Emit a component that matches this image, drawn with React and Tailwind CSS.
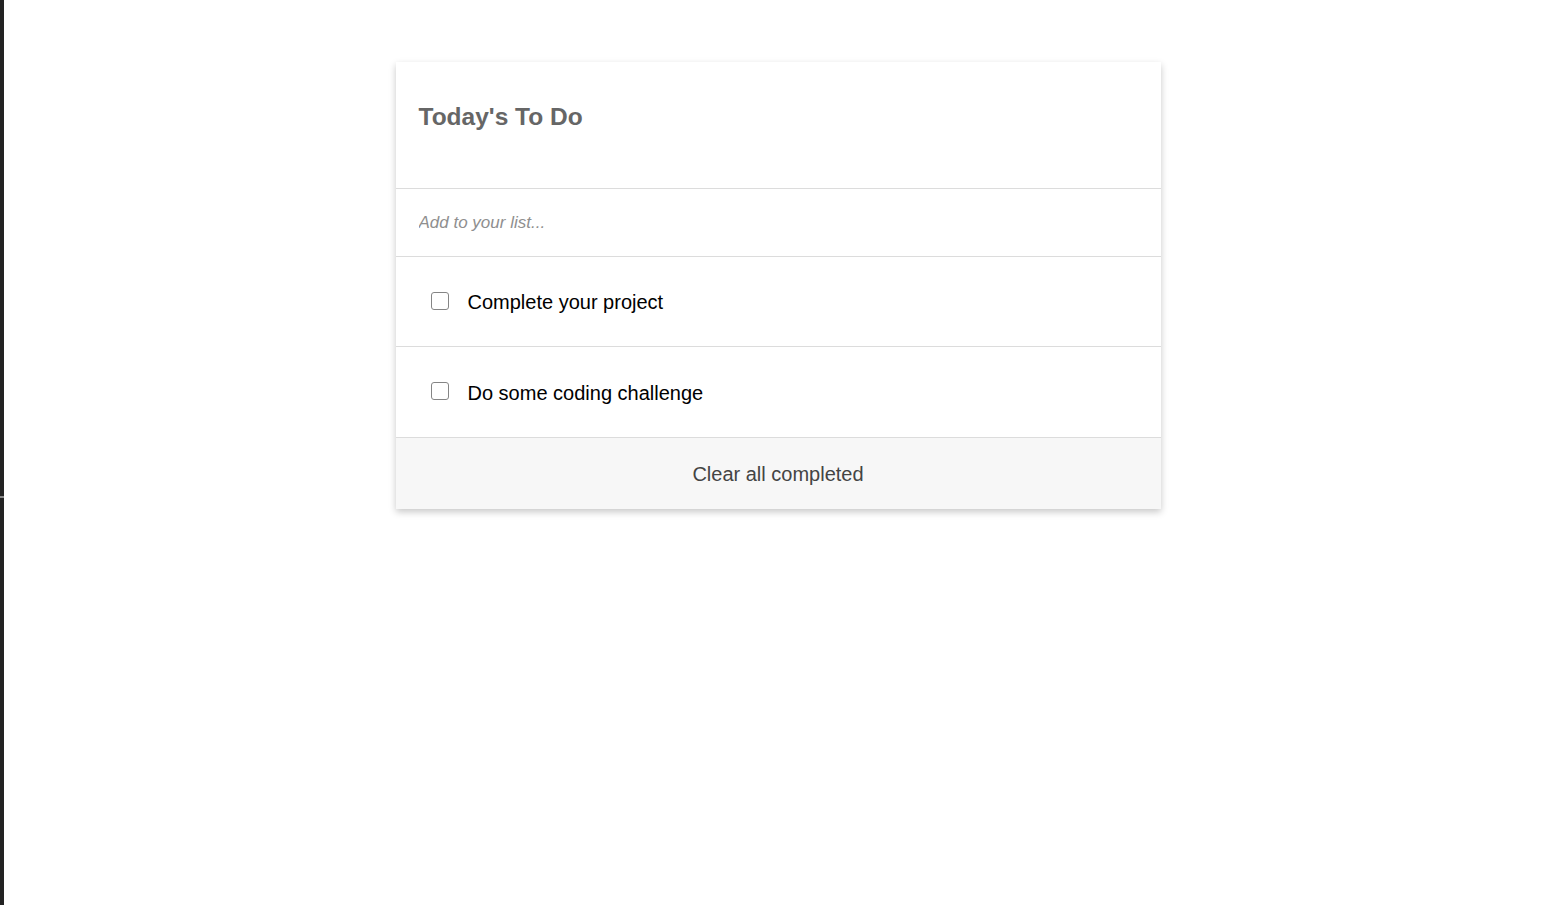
import React, { useState } from "react";

const initialTodos = [
  { id: 1, text: "Complete your project", done: false },
  { id: 2, text: "Do some coding challenge", done: false },
];

const App = () => {
  const [todos, setTodos] = useState(initialTodos);
  const [draft, setDraft] = useState("");

  const toggle = (id) =>
    setTodos((prev) => prev.map((t) => (t.id === id ? { ...t, done: !t.done } : t)));

  const addTodo = (e) => {
    e.preventDefault();
    if (!draft.trim()) return;
    setTodos((prev) => [...prev, { id: Date.now(), text: draft.trim(), done: false }]);
    setDraft("");
  };

  return (
    <div className="flex min-h-screen bg-white font-['Liberation_Sans',Arial,sans-serif]">
      {/* left window edge */}
      <div className="relative w-[4px] shrink-0 bg-[#232323]">
        <div className="absolute left-0 top-[496px] h-[2px] w-[4px] bg-[#8a8a8a]" />
      </div>

      <div className="flex flex-1 justify-center items-start pt-[62px]">
        <div className="w-[765px] bg-white shadow-[0_3px_7px_rgba(0,0,0,0.22)]">
          {/* Header */}
          <div className="h-[127px] border-b border-[#dcdcdc] px-[23px] pt-[39px]">
            <h1 className="text-[24.5px] leading-[32px] font-bold text-[#666]">Today's To Do</h1>
          </div>

          {/* Input */}
          <form onSubmit={addTodo} className="border-b border-[#dcdcdc]">
            <input
              value={draft}
              onChange={(e) => setDraft(e.target.value)}
              placeholder="Add to your list..."
              className="w-full h-[67px] px-[23px] text-[17px] italic text-[#333] placeholder:text-[#8f8f8f] outline-none bg-transparent"
            />
          </form>

          {/* Items */}
          {todos.map((todo, i) => (
            <label
              key={todo.id}
              className={`flex items-center border-b border-[#dcdcdc] pl-[35px] cursor-pointer ${i === 0 ? "h-[90px]" : "h-[91px]"}`}
            >
              <input
                type="checkbox"
                checked={todo.done}
                onChange={() => toggle(todo.id)}
                className="appearance-none w-[18px] h-[18px] border border-[#858585] rounded-[3px] bg-white checked:bg-[#0075ff] checked:border-[#0075ff] shrink-0 -mt-[2px]"
              />
              <span
                className={`ml-[19px] text-[20px] leading-[24px] text-black mt-[1px] ${todo.done ? "line-through text-[#999]" : ""}`}
              >
                {todo.text}
              </span>
            </label>
          ))}

          {/* Footer */}
          <button
            onClick={() => setTodos((prev) => prev.filter((t) => !t.done))}
            className="w-full h-[71px] bg-[#f7f7f7] text-[20px] text-[#444] flex items-center justify-center"
          >
            Clear all completed
          </button>
        </div>
      </div>
    </div>
  );
};

export default App;
